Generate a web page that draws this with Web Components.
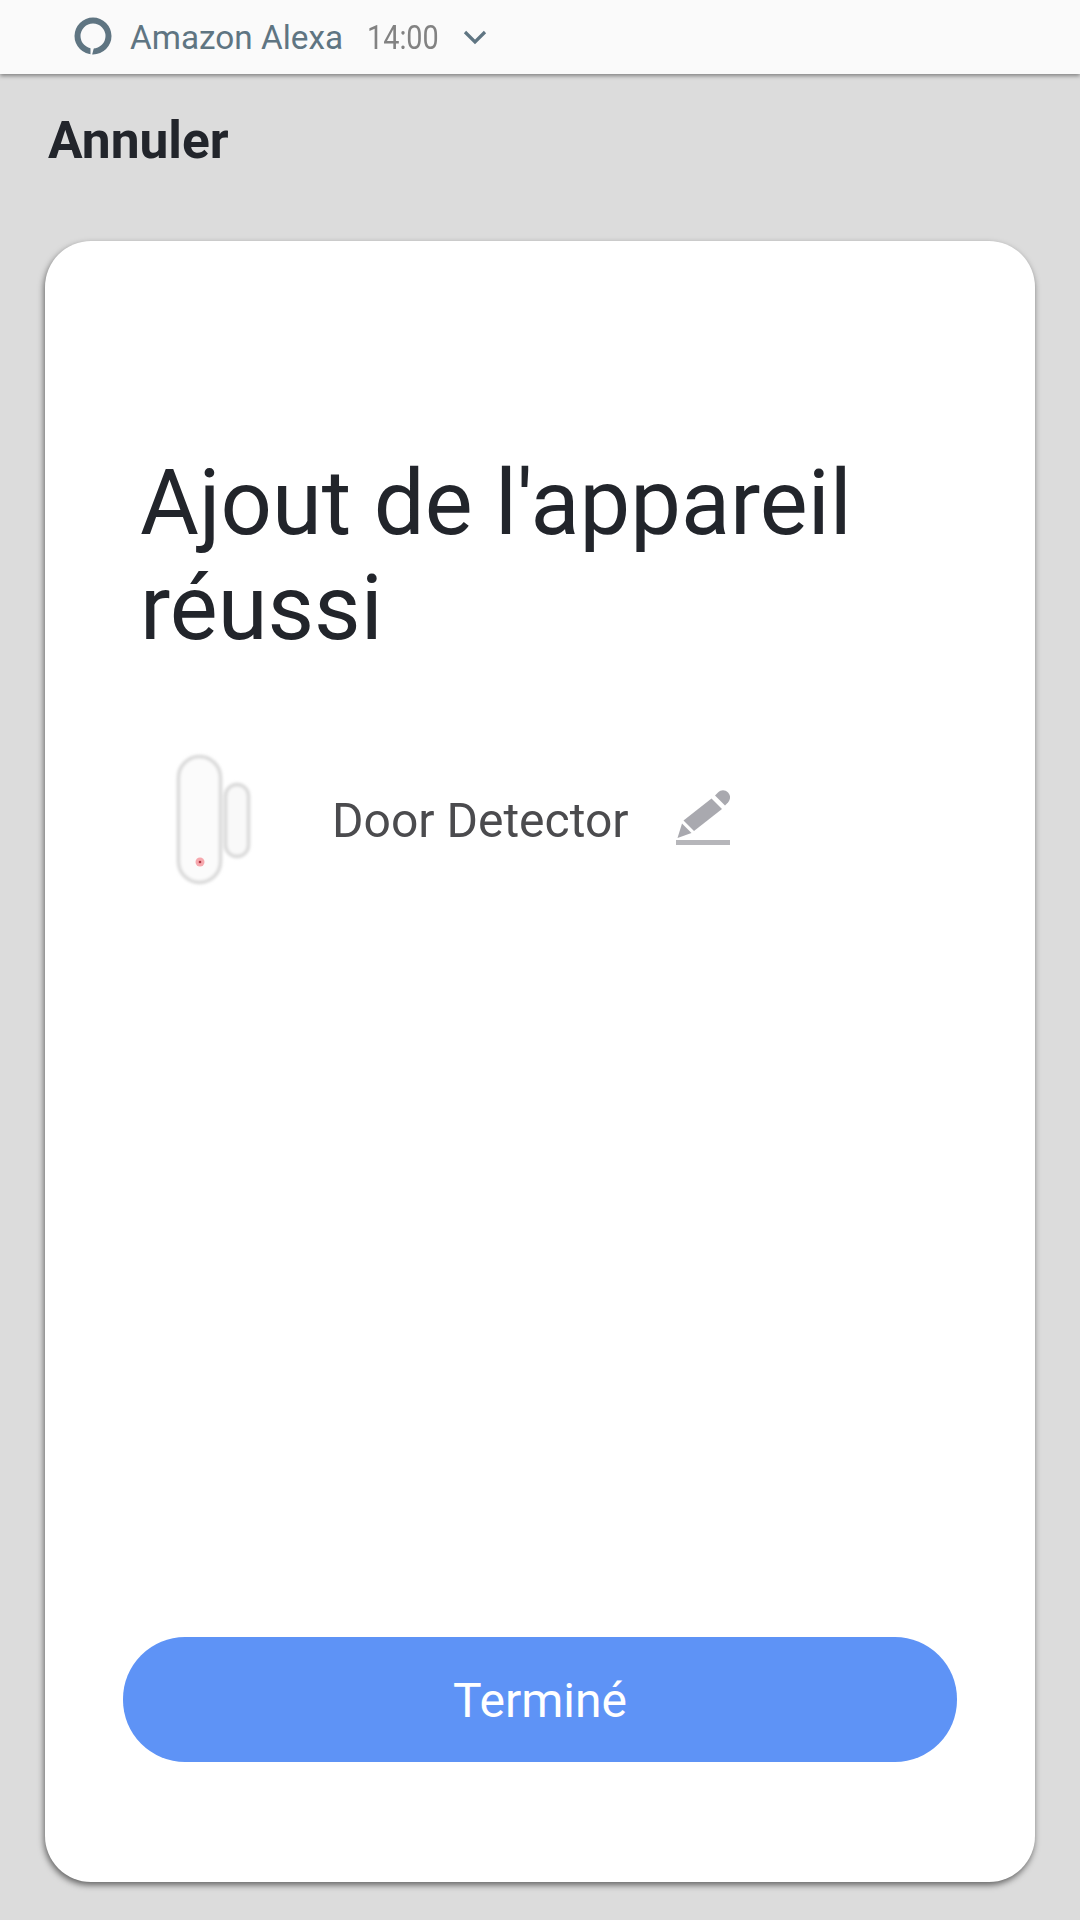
<!DOCTYPE html>
<html lang="fr">
<head>
<meta charset="utf-8">
<title>Ajout de l'appareil</title>
<style>
  html, body { margin: 0; height: 1920px; background: #dcdcdc; overflow: hidden; }
  body { display: flex; flex-direction: column; font-family: Roboto, "Liberation Sans", sans-serif; }
</style>
</head>
<body>
<status-bar app="Amazon Alexa" time="14:00"></status-bar>
<cancel-link>Annuler</cancel-link>
<result-card heading="Ajout de l'appareil réussi">
  <device-row name="Door Detector"></device-row>
  <done-button slot="action">Terminé</done-button>
</result-card>

<script>
class StatusBar extends HTMLElement {
  constructor() {
    super();
    this.attachShadow({ mode: 'open' });
    this.shadowRoot.innerHTML = `
      <style>
        :host {
          display: flex;
          align-items: center;
          box-sizing: border-box;
          height: 74px;
          padding-left: 74px;
          background: #fafafa;
          box-shadow: 0 2px 4px rgba(0, 0, 0, .4);
          position: relative;
          z-index: 2;
          flex: none;
        }
        svg { display: block; flex: none; }
        .app { margin-left: 18px; font-size: 33.300px; color: #5f7582; }
        /* the clock is drawn narrow in the status bar */
        .time {
          display: inline-block;
          width: 71px;
          margin-left: 24px;
          font-size: 33.500px;
          color: #828282;
          white-space: nowrap;
          transform: scaleX(.86);
          transform-origin: left center;
        }
        .chev { margin-left: 25px; }
      </style>
      <svg width="38" height="38" viewBox="0 0 38 38" style="margin-top:-2px">
        <path fill="#5f7582" fill-rule="evenodd" d="M19 .5a18.500 18.500 0 1 1 0 37 18.500 18.500 0 0 1 0-37zM19 6.500a12.500 12.500 0 1 0 0 25 12.500 12.500 0 0 0 0-25z"/>
        <path fill="#fafafa" d="M16.500 30.500h3.500L18 38h-1.500z"/>
      </svg>
      <span class="app"></span>
      <span class="time"></span>
      <svg class="chev" width="24" height="16" viewBox="0 0 24 16">
        <path d="M2 3l10 10L22 3" fill="none" stroke="#5f7582" stroke-width="3.200"/>
      </svg>`;
    this.shadowRoot.querySelector('.app').textContent = this.getAttribute('app');
    this.shadowRoot.querySelector('.time').textContent = this.getAttribute('time');
  }
}

class CancelLink extends HTMLElement {
  constructor() {
    super();
    this.attachShadow({ mode: 'open' });
    this.shadowRoot.innerHTML = `
      <style>
        :host {
          display: block;
          flex: none;
          height: 167px;
          box-sizing: border-box;
          padding: 39px 0 0 48px;
          font-size: 51.500px;
          line-height: 56px;
          font-weight: 700;
          color: #22252b;
        }
      </style>
      <slot></slot>`;
  }
}

class ResultCard extends HTMLElement {
  constructor() {
    super();
    this.attachShadow({ mode: 'open' });
    this.shadowRoot.innerHTML = `
      <style>
        :host {
          display: flex;
          flex-direction: column;
          box-sizing: border-box;
          width: 990px;
          height: 1641px;
          margin-left: 45px;
          padding: 210px 78px 120px 95px;
          background: #fff;
          border-radius: 46px;
          box-shadow: -1px 3px 6px rgba(0, 0, 0, .55);
          flex: none;
        }
        h1 {
          margin: 0;
          font-size: 90.300px;
          line-height: 105px;
          font-weight: 400;
          color: #22252b;
        }
        .body { flex: 1; padding-top: 94px; }
        .action { margin-left: -17px; }
      </style>
      <h1></h1>
      <div class="body"><slot></slot></div>
      <div class="action"><slot name="action"></slot></div>`;
    this.shadowRoot.querySelector('h1').textContent = this.getAttribute('heading');
  }
}

class DeviceRow extends HTMLElement {
  constructor() {
    super();
    this.attachShadow({ mode: 'open' });
    this.shadowRoot.innerHTML = `
      <style>
        :host {
          display: flex;
          align-items: center;
          height: 130px;
          color: #4b4b4e;
          font-size: 48px;
        }
        svg { display: block; flex: none; }
        .sensor { margin-left: 30px; }
        .name { margin-left: 77px; will-change: transform; }
        .edit { margin-left: 47px; margin-bottom: 5px; }
      </style>
      <svg class="sensor" width="85" height="140" viewBox="0 0 85 140">
        <defs>
          <filter id="soft" x="-10%" y="-10%" width="120%" height="120%"><feGaussianBlur stdDeviation="1.500"/></filter>
          <filter id="dot" x="-50%" y="-50%" width="200%" height="200%"><feGaussianBlur stdDeviation=".5"/></filter>
        </defs>
        <g filter="url(#soft)">
          <rect x="8.500" y="6.500" width="42" height="126" rx="21" fill="#fbfbfb" stroke="#d8d8d8" stroke-width="3.500"/>
          <rect x="55.500" y="34.500" width="23" height="72" rx="11.500" fill="#f9f9f9" stroke="#d8d8d8" stroke-width="3.500"/>
        </g>
        <g filter="url(#dot)">
          <circle cx="30" cy="112" r="4.500" fill="#f6a8ae"/>
          <circle cx="30" cy="112" r="1.300" fill="#b03844"/>
        </g>
      </svg>
      <span class="name"></span>
      <svg class="edit" width="54" height="55" viewBox="0 0 54 55">
        <defs>
          <filter id="blur" x="-5%" y="-5%" width="110%" height="110%"><feGaussianBlur stdDeviation=".6"/></filter>
        </defs>
        <g filter="url(#blur)" fill="#a9a9af">
          <path d="M39 5.500L42 2.500c3-3 7-3 10 0s2.500 7 0 10L49 15.500z"/>
          <path d="M35.500 8.500L46 19 18 41 7.500 30.500z"/>
          <path d="M6 33.500L15.500 43 1.500 48z"/>
          <rect x="0" y="50" width="54" height="5" fill="#b6b6ba"/>
        </g>
      </svg>`;
    this.shadowRoot.querySelector('.name').textContent = this.getAttribute('name');
  }
}

class DoneButton extends HTMLElement {
  constructor() {
    super();
    this.attachShadow({ mode: 'open' });
    this.shadowRoot.innerHTML = `
      <style>
        :host {
          display: flex;
          align-items: center;
          justify-content: center;
          box-sizing: border-box;
          width: 834px;
          height: 125px;
          padding-top: 2px;
          border-radius: 62px;
          background: #5e93f6;
          color: #fff;
          font-size: 48px;
        }
      </style>
      <slot></slot>`;
  }
}

customElements.define('status-bar', StatusBar);
customElements.define('cancel-link', CancelLink);
customElements.define('result-card', ResultCard);
customElements.define('device-row', DeviceRow);
customElements.define('done-button', DoneButton);
</script>
</body>
</html>
